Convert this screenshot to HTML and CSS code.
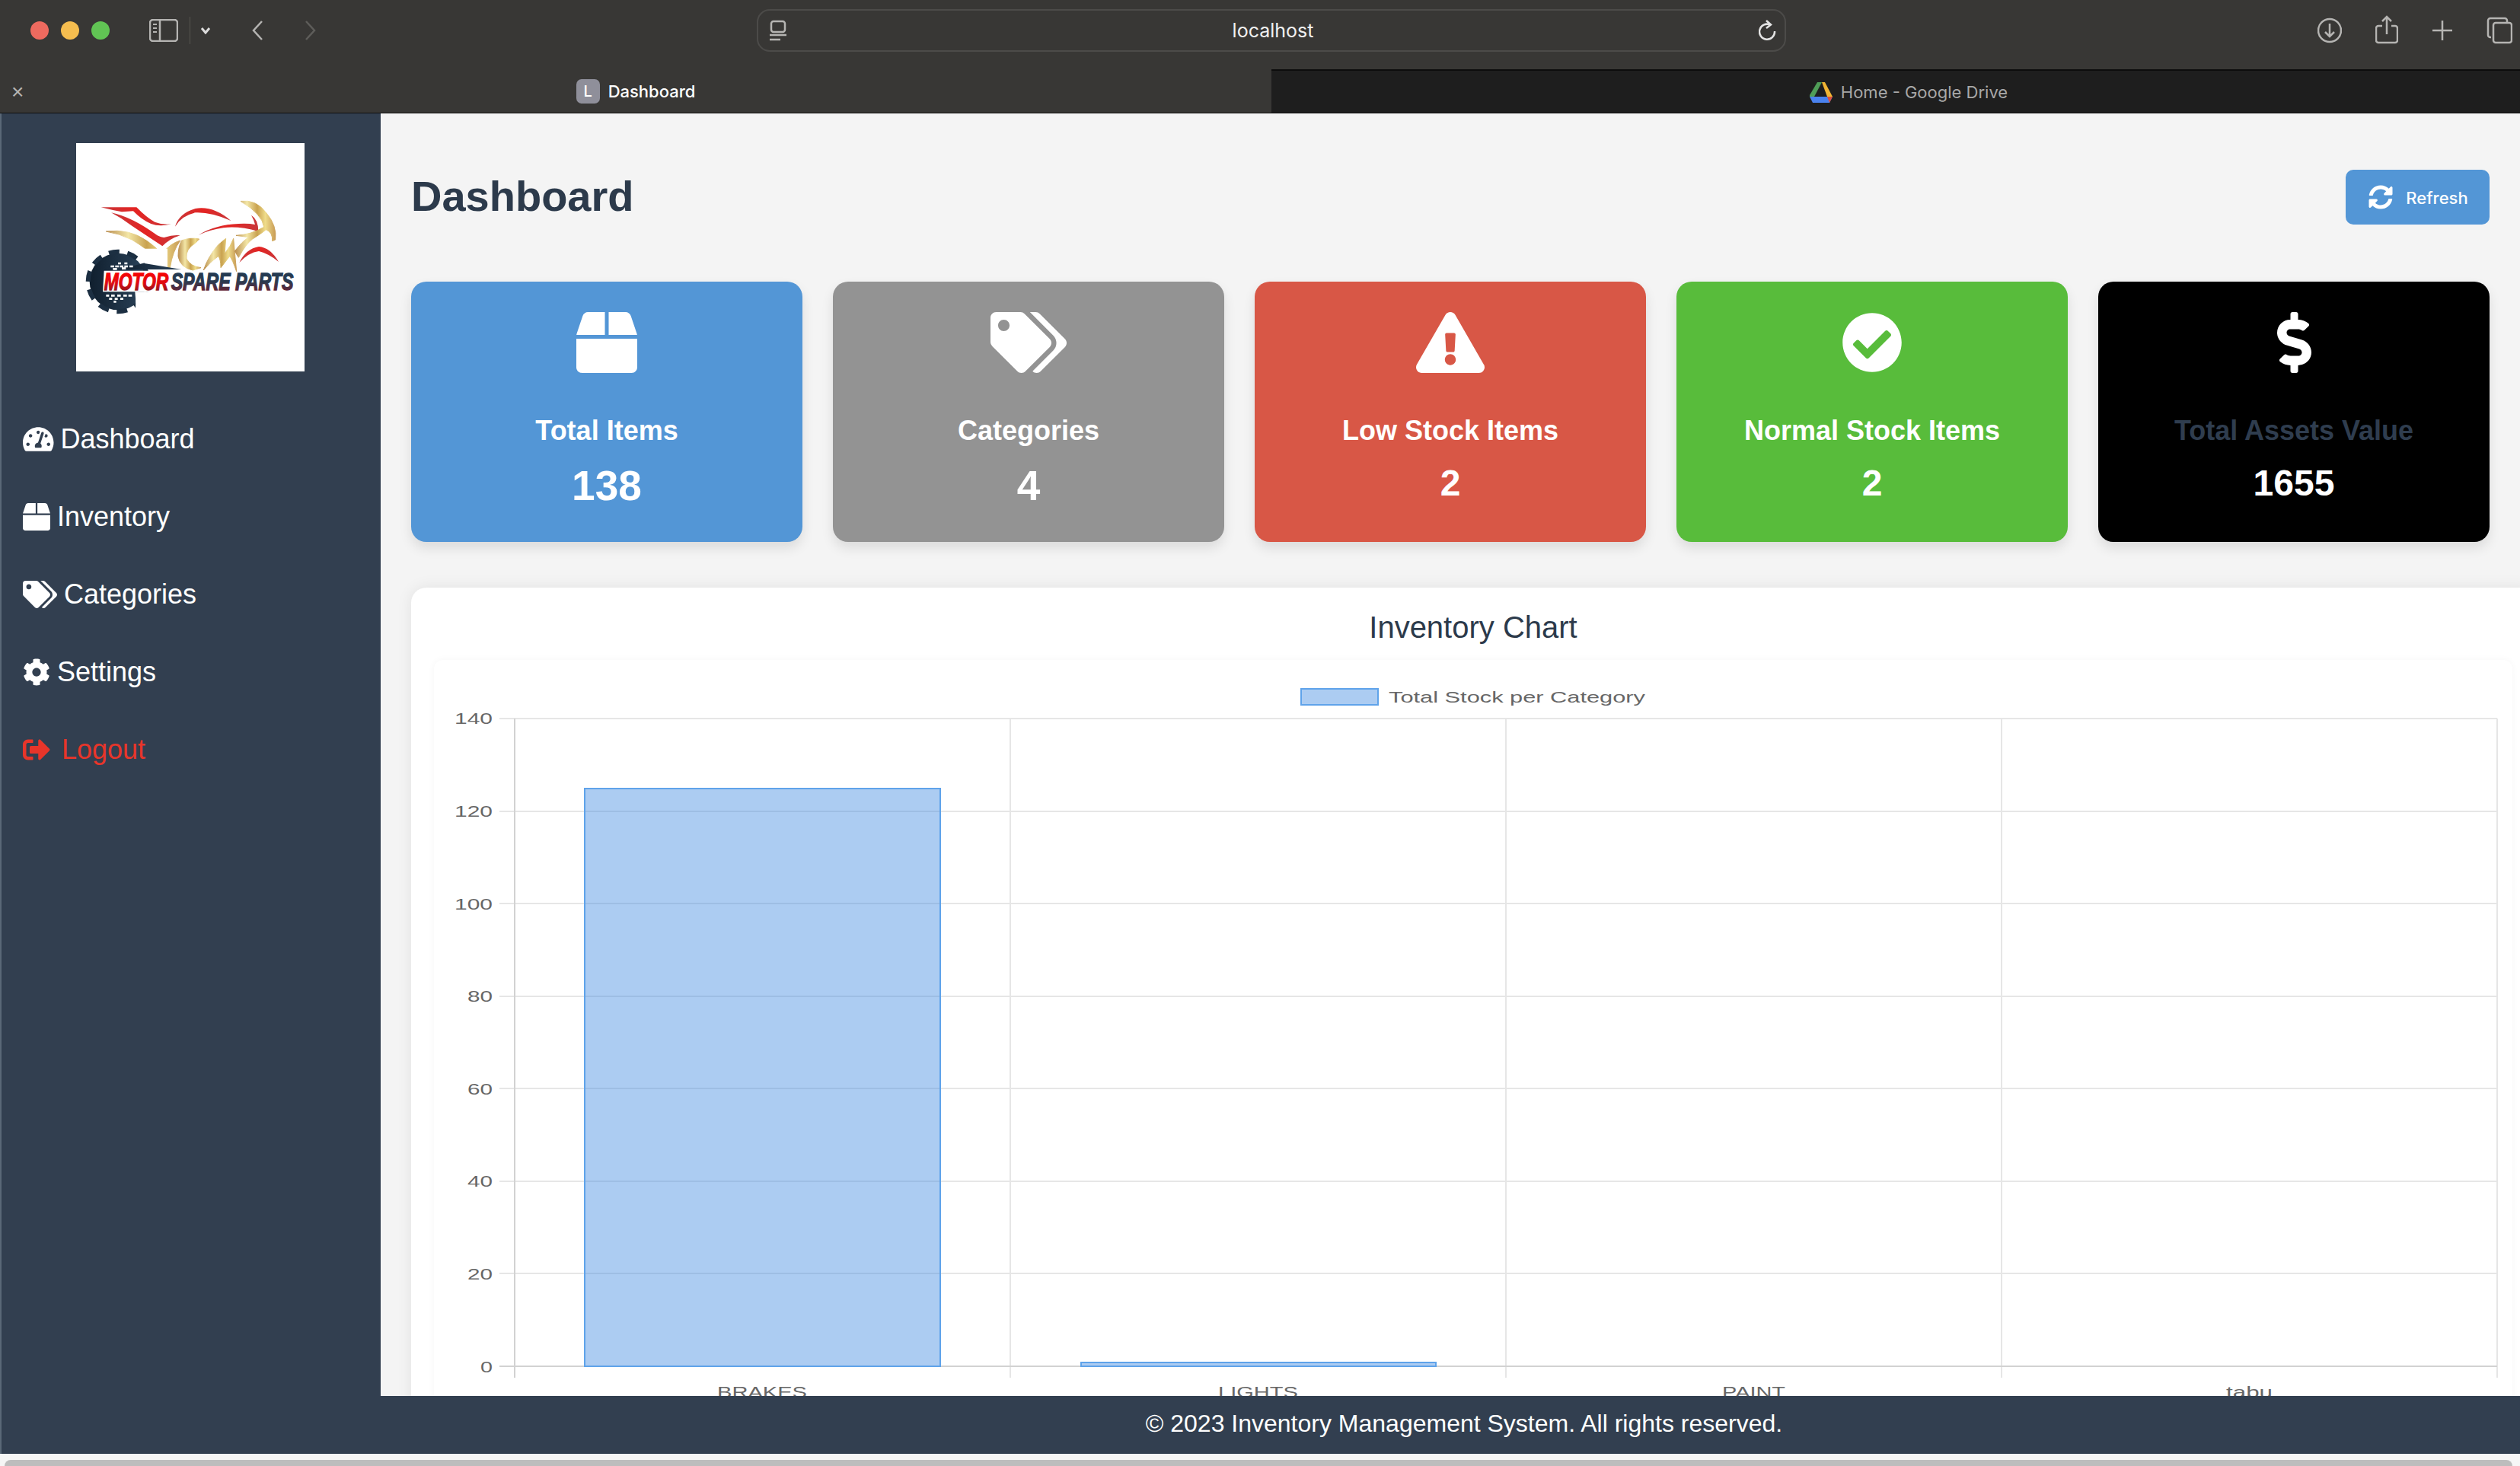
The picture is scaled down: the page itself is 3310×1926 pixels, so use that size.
FILE: index.html
```html
<!DOCTYPE html>
<html lang="en">
<head>
<meta charset="utf-8">
<title>Dashboard</title>
<link rel="stylesheet" href="styles.css">
</head>
<body>
<header class="toolbar">
  <div class="lights"><span class="light red"></span><span class="light yellow"></span><span class="light green"></span></div>
  <svg class="tb-sidebar" viewBox="0 0 38 30"><rect x="1" y="1" width="36" height="28" rx="4"/><path d="M14 1v28"/><path class="thin" d="M5 7h5M5 12h5M5 17h5"/></svg>
  <span class="tb-divider"></span>
  <svg class="tb-caret" viewBox="0 0 14 10"><path d="M2 2l5 6 5-6"/></svg>
  <svg class="tb-back" viewBox="0 0 16 28"><path d="M14 2L3 14l11 12"/></svg>
  <svg class="tb-forward" viewBox="0 0 16 28"><path d="M2 2l11 12L2 26"/></svg>
  <div class="urlbar">
    <svg class="url-icon" viewBox="0 0 24 28"><rect x="3" y="2" width="18" height="14" rx="3"/><path d="M1 20h22M1 26h14"/></svg>
    <span class="url-text">localhost</span>
    <svg class="url-reload" viewBox="0 0 24 30"><path d="M15 7.500A10 10 0 1 0 21 16"/><path d="M10 2l6 5.500-6 4.500"/></svg>
  </div>
  <div class="tb-right">
    <svg class="tb-dl" viewBox="0 0 32 36"><circle cx="16" cy="18" r="15"/><path d="M16 9v17M10 20l6 6 6-6"/></svg>
    <svg class="tb-share" viewBox="0 0 30 38"><path d="M9 14H4a3 3 0 0 0-3 3v16a3 3 0 0 0 3 3h22a3 3 0 0 0 3-3V17a3 3 0 0 0-3-3h-5"/><path d="M15 25V2M9 8l6-6 6 6"/></svg>
    <svg class="tb-plus" viewBox="0 0 28 28"><path d="M14 1v26M1 14h26"/></svg>
    <svg class="tb-tabs" viewBox="0 0 34 36"><path d="M6 27H5a3 3 0 0 1-3-3V5a3 3 0 0 1 3-3h19a3 3 0 0 1 3 3v2"/><rect x="9" y="8" width="24" height="26" rx="3"/></svg>
  </div>
</header>

<nav class="tabbar">
  <div class="tab tab-active">
    <span class="tab-close">×</span>
    <span class="favicon">L</span>
    <span class="tab-title">Dashboard</span>
  </div>
  <div class="tab tab-idle">
    <svg class="drive" viewBox="0 0 30 28">
      <path fill="#4f9d57" d="M10 1h6L6 20 0 20l0-2z"/>
      <path fill="#f2b533" d="M16 1h4l10 19h-7z"/>
      <path fill="#4a82ee" d="M6 20h24l-4 8H4l-4-8z"/>
      <path fill="#d9503f" d="M23 20h7l-4 8z"/>
    </svg>
    <span class="tab-title tab-title-dim">Home - Google Drive</span>
  </div>
</nav>

<div class="app">
  <aside class="sidebar">
    <div class="logo">
      <svg class="logo-art" viewBox="120 54 900 900" role="img" aria-label="MCM Motor Spare Parts logo">
        <defs>
          <linearGradient id="gold" x1="0" y1="0" x2="1" y2="0">
            <stop offset="0" stop-color="#b98d4e"/><stop offset=".3" stop-color="#f3e6a6"/><stop offset=".55" stop-color="#c9a24f"/><stop offset=".75" stop-color="#efdc8a"/><stop offset="1" stop-color="#c79a54"/>
          </linearGradient>
          <linearGradient id="redg" x1="0" y1="0" x2="1" y2="0">
            <stop offset="0" stop-color="#c8383a"/><stop offset=".5" stop-color="#e42322"/><stop offset="1" stop-color="#c8383a"/>
          </linearGradient>
          <linearGradient id="motor" x1="0" y1="0" x2="0" y2="1">
            <stop offset="0" stop-color="#ff0000"/><stop offset=".55" stop-color="#e00a10"/><stop offset="1" stop-color="#6e1822"/>
          </linearGradient>
          <linearGradient id="spare" x1="0" y1="0" x2="0" y2="1">
            <stop offset="0" stop-color="#1f3a52"/><stop offset=".5" stop-color="#2c3a50"/><stop offset="1" stop-color="#7c1a28"/>
          </linearGradient>
          <linearGradient id="navyg" x1="0" y1="0" x2="1" y2="0">
            <stop offset="0" stop-color="#101f2e"/><stop offset="1" stop-color="#2b435a"/>
          </linearGradient>
        </defs>
        <path fill="url(#redg)" d="M218 307L358 307Q400 350 430 365Q465 378 495 373Q450 385 415 372Q380 358 345 322L300 325Q260 318 218 307Z"/>
        <path fill="url(#redg)" d="M258 328Q340 345 440 418Q460 428 470 425Q500 415 530 418Q490 430 460 460Q400 420 340 380Q300 350 258 328Z"/>
        <path fill="url(#redg)" d="M510 383Q525 330 590 312Q660 300 730 360Q650 325 590 328Q535 340 510 383Z"/>
        <path fill="url(#redg)" d="M602 416Q670 375 760 372Q800 370 825 375Q820 355 810 338Q838 355 838 402Q760 380 700 388Q650 395 602 416Z"/>
        <path fill="url(#redg)" d="M763 525Q790 470 840 462Q885 465 918 522Q880 490 840 480Q800 485 763 525Z"/>
        <path class="gold-shape" d="M238 402Q330 390 400 440Q435 465 458 490Q490 450 530 438Q500 480 490 545L455 540L440 512Q400 470 340 435Q290 410 238 402Z"/>
        <path class="gold-shape" d="M535 438Q570 425 605 432L590 448Q550 470 555 510Q570 540 612 545L580 555Q530 545 522 500Q522 465 535 438Z"/>
        <path class="gold-shape" d="M622 555Q640 500 680 455L710 430L705 490Q730 460 740 430L752 560Q735 510 725 500L690 545Q690 510 680 500Q650 520 622 555Z"/>
        <path class="gold-shape" d="M768 283Q830 275 870 330Q912 380 905 435L893 440Q895 405 868 395Q850 410 815 432Q790 450 760 505L745 480Q775 440 800 425L750 418Q810 415 860 385Q855 335 768 283Z"/>
        <circle class="gear-body" cx="285" cy="600" r="112"/>
        <circle class="gear-teeth" cx="285" cy="600" r="118"/>
        <path fill="#fff" d="M352 640H480V745H350Q358 690 352 640Z"/>
        <path fill="#fff" d="M230 557H535V640H225Z"/>
        <path fill="#fff" d="M372 470H480V545L398 528Z"/>
        <path fill="url(#navyg)" d="M385 527L535 552H290Z"/>
        <path class="gear-check" d="M256 540h14M274 540h14M292 540h14M310 540h14M330 540h14M285 528h12M310 528h12M265 550h16M300 548h16M238 655h12M258 655h14M282 655h14M306 655h14M326 655h14M250 668h12M272 668h12M294 668h12M268 679h10"/>
        <text class="logo-text logo-motor" x="230" y="634" textLength="254" lengthAdjust="spacingAndGlyphs">MOTOR</text>
        <text class="logo-text logo-spare" x="494" y="634" textLength="482" lengthAdjust="spacingAndGlyphs">SPARE PARTS</text>
      </svg>
    </div>
    <ul class="nav">
      <li class="nav-item"><svg class="nav-icon" viewBox="0 0 576 512"><path d="M288 32C128.94 32 0 160.94 0 320c0 52.8 14.25 102.26 39.06 144.8 5.61 9.62 16.3 15.2 27.44 15.2h443c11.14 0 21.83-5.58 27.44-15.2C561.75 422.26 576 372.8 576 320c0-159.06-128.94-288-288-288zm0 64c14.71 0 26.58 10.13 30.32 23.65-1.11 2.26-2.64 4.23-3.45 6.67l-9.22 27.67c-5.13 3.49-10.97 6.01-17.64 6.01-17.67 0-32-14.33-32-32S270.33 96 288 96zM96 384c-17.67 0-32-14.33-32-32s14.33-32 32-32 32 14.33 32 32-14.33 32-32 32zm48-160c-17.67 0-32-14.33-32-32s14.33-32 32-32 32 14.33 32 32-14.33 32-32 32zm246.77-72.41l-61.33 184C343.13 347.33 352 364.54 352 384c0 11.72-3.38 22.55-8.88 32H232.88c-5.5-9.45-8.88-20.28-8.88-32 0-33.94 26.5-61.43 59.9-63.59l61.34-184.01c4.17-12.56 17.73-19.45 30.36-15.17 12.57 4.19 19.35 17.79 15.17 30.36zm14.66 57.2l15.52-46.55c3.47-1.29 7.13-2.23 11.05-2.23 17.67 0 32 14.33 32 32s-14.33 32-32 32c-11.38-.01-20.89-6.28-26.57-15.22zM480 384c-17.67 0-32-14.33-32-32s14.33-32 32-32 32 14.33 32 32-14.33 32-32 32z"/></svg>Dashboard</li>
      <li class="nav-item"><svg class="nav-icon" viewBox="0 0 512 512"><path d="M509.5 184.6L458.9 32.8C452.4 13.2 434.1 0 413.4 0H272v192h238.7c-.4-2.5-.4-5-1.2-7.4zM240 0H98.6c-20.7 0-39 13.2-45.5 32.8L2.5 184.6c-.8 2.4-.8 4.9-1.2 7.4H240V0zM0 224v240c0 26.5 21.5 48 48 48h416c26.5 0 48-21.5 48-48V224H0z"/></svg>Inventory</li>
      <li class="nav-item"><svg class="nav-icon" viewBox="0 0 640 512"><path d="M497.941 225.941L286.059 14.059A48 48 0 0 0 252.118 0H48C21.49 0 0 21.49 0 48v204.118a48 48 0 0 0 14.059 33.941l211.882 211.882c18.744 18.745 49.136 18.746 67.882 0l204.118-204.118c18.745-18.745 18.745-49.137 0-67.882zM112 160c-26.51 0-48-21.49-48-48s21.49-48 48-48 48 21.49 48 48-21.49 48-48 48zm513.941 133.823L421.823 497.941c-18.745 18.745-49.137 18.745-67.882 0l-.36-.36L527.64 323.522c16.999-16.999 26.36-39.6 26.36-63.64s-9.362-46.641-26.36-63.64L331.397 0h48.721a48 48 0 0 1 33.941 14.059l211.882 211.882c18.745 18.745 18.745 49.137 0 67.882z"/></svg>Categories</li>
      <li class="nav-item"><svg class="nav-icon" viewBox="0 0 512 512"><path d="M487.4 315.7l-42.6-24.6c4.3-23.2 4.3-47 0-70.2l42.6-24.6c4.9-2.8 7.1-8.6 5.5-14-11.1-35.6-30-67.8-54.7-94.6-3.8-4.1-10-5.1-14.8-2.3L380.8 110c-17.9-15.4-38.5-27.3-60.8-35.1V25.8c0-5.6-3.9-10.5-9.4-11.7-36.7-8.2-74.3-7.8-109.2 0-5.5 1.2-9.4 6.1-9.4 11.7V75c-22.2 7.9-42.8 19.8-60.8 35.1L88.7 85.500c-4.9-2.8-11-1.9-14.8 2.3-24.7 26.7-43.6 58.9-54.7 94.6-1.7 5.4.6 11.2 5.5 14L67.3 221c-4.3 23.2-4.3 47 0 70.2l-42.6 24.6c-4.9 2.8-7.1 8.6-5.5 14 11.1 35.6 30 67.8 54.7 94.6 3.8 4.1 10 5.1 14.8 2.3l42.6-24.6c17.9 15.4 38.5 27.3 60.8 35.1v49.2c0 5.6 3.9 10.5 9.4 11.7 36.7 8.2 74.3 7.8 109.2 0 5.5-1.2 9.4-6.1 9.4-11.7v-49.2c22.2-7.9 42.8-19.8 60.8-35.1l42.6 24.6c4.9 2.8 11 1.9 14.8-2.3 24.7-26.7 43.6-58.9 54.7-94.6 1.5-5.5-.7-11.3-5.6-14.1zM256 336c-44.1 0-80-35.9-80-80s35.9-80 80-80 80 35.9 80 80-35.9 80-80 80z"/></svg>Settings</li>
      <li class="nav-item nav-logout"><svg class="nav-icon" viewBox="0 0 512 512"><path d="M497 273L329 441c-15 15-41 4.500-41-17v-96H152c-13.3 0-24-10.7-24-24v-96c0-13.3 10.7-24 24-24h136V88c0-21.400 25.900-32 41-17l168 168c9.300 9.400 9.300 24.600 0 34zM192 436v-40c0-6.600-5.400-12-12-12H96c-17.700 0-32-14.300-32-32V160c0-17.700 14.300-32 32-32h84c6.600 0 12-5.400 12-12V76c0-6.600-5.400-12-12-12H96c-53 0-96 43-96 96v192c0 53 43 96 96 96h84c6.600 0 12-5.400 12-12z"/></svg>Logout</li>
    </ul>
  </aside>

  <main class="main">
    <div class="page-head">
      <h1 class="page-title">Dashboard</h1>
      <button class="refresh"><svg class="refresh-icon" viewBox="0 0 512 512"><path d="M370.72 133.28C339.458 104.008 298.888 87.962 255.848 88c-77.458.068-144.328 53.178-162.791 126.85-1.344 5.363-6.122 9.15-11.651 9.15H24.103c-7.498 0-13.194-6.807-11.807-14.176C33.933 94.924 134.813 8 256 8c66.448 0 126.791 26.136 171.315 68.685L463.03 40.97C478.149 25.851 504 36.559 504 57.941V192c0 13.255-10.745 24-24 24H345.941c-21.382 0-32.09-25.851-16.971-40.971l41.75-41.749zM32 296h134.059c21.382 0 32.09 25.851 16.971 40.971l-41.75 41.75c31.262 29.273 71.835 45.319 114.876 45.28 77.418-.07 144.315-53.144 162.787-126.849 1.344-5.363 6.122-9.15 11.651-9.15h57.304c7.498 0 13.194 6.807 11.807 14.176C478.067 417.076 377.187 504 256 504c-66.448 0-126.791-26.136-171.315-68.685L48.97 471.03C33.851 486.149 8 475.441 8 454.059V320c0-13.255 10.745-24 24-24z"/></svg>Refresh</button>
    </div>

    <section class="cards">
      <article class="card card-blue">
        <svg class="card-icon" viewBox="0 0 512 512"><path d="M509.5 184.6L458.9 32.8C452.4 13.2 434.1 0 413.4 0H272v192h238.7c-.4-2.5-.4-5-1.2-7.4zM240 0H98.6c-20.7 0-39 13.2-45.5 32.8L2.5 184.6c-.8 2.4-.8 4.9-1.2 7.4H240V0zM0 224v240c0 26.5 21.5 48 48 48h416c26.5 0 48-21.5 48-48V224H0z"/></svg>
        <h3 class="card-label">Total Items</h3>
        <p class="card-value card-value-lg">138</p>
      </article>
      <article class="card card-grey">
        <svg class="card-icon" viewBox="0 0 640 512"><path d="M497.941 225.941L286.059 14.059A48 48 0 0 0 252.118 0H48C21.49 0 0 21.49 0 48v204.118a48 48 0 0 0 14.059 33.941l211.882 211.882c18.744 18.745 49.136 18.746 67.882 0l204.118-204.118c18.745-18.745 18.745-49.137 0-67.882zM112 160c-26.51 0-48-21.49-48-48s21.49-48 48-48 48 21.49 48 48-21.49 48-48 48zm513.941 133.823L421.823 497.941c-18.745 18.745-49.137 18.745-67.882 0l-.36-.36L527.64 323.522c16.999-16.999 26.36-39.6 26.36-63.64s-9.362-46.641-26.36-63.64L331.397 0h48.721a48 48 0 0 1 33.941 14.059l211.882 211.882c18.745 18.745 18.745 49.137 0 67.882z"/></svg>
        <h3 class="card-label">Categories</h3>
        <p class="card-value card-value-lg">4</p>
      </article>
      <article class="card card-red">
        <svg class="card-icon" viewBox="0 0 576 512"><path d="M569.517 440.013C587.975 472.007 564.806 512 527.94 512H48.054c-36.937 0-59.999-40.055-41.577-71.987L246.423 24.035c18.467-32.009 64.72-31.951 83.154 0l239.94 416.978zM288 354c-25.405 0-46 20.595-46 46s20.595 46 46 46 46-20.595 46-46-20.595-46-46-46zm-43.673-165.346l7.418 136c.347 6.364 5.609 11.346 11.982 11.346h48.546c6.373 0 11.635-4.982 11.982-11.346l7.418-136c.375-6.874-5.098-12.654-11.982-12.654h-63.383c-6.884 0-12.356 5.78-11.981 12.654z"/></svg>
        <h3 class="card-label">Low Stock Items</h3>
        <p class="card-value">2</p>
      </article>
      <article class="card card-green">
        <svg class="card-icon" viewBox="0 0 512 512"><path d="M504 256c0 136.967-111.033 248-248 248S8 392.967 8 256 119.033 8 256 8s248 111.033 248 248zM227.314 387.314l184-184c6.248-6.248 6.248-16.379 0-22.627l-22.627-22.627c-6.248-6.249-16.379-6.249-22.628 0L216 308.118l-70.059-70.059c-6.248-6.248-16.379-6.248-22.628 0l-22.627 22.627c-6.248 6.248-6.248 16.379 0 22.627l104 104c6.249 6.249 16.379 6.249 22.628.001z"/></svg>
        <h3 class="card-label">Normal Stock Items</h3>
        <p class="card-value">2</p>
      </article>
      <article class="card card-black">
        <svg class="card-icon" viewBox="0 0 288 512"><path d="M209.2 233.4l-108-31.6C88.7 198.2 80 186.5 80 173.500c0-16.300 13.200-29.500 29.500-29.500h66.300c12.200 0 24.200 3.700 34.200 10.500 6.100 4.100 14.300 3.100 19.500-2l34.800-34c7.100-6.900 6.100-18.400-1.800-24.500C238 74.800 207.400 64.100 176 64V16c0-8.800-7.200-16-16-16h-32c-8.800 0-16 7.200-16 16v48h-2.500C45.800 64-5.400 118.700.5 183.600c4.200 46.100 39.400 83.600 83.800 96.600l102.500 30c12.500 3.700 21.200 15.300 21.200 28.300 0 16.300-13.200 29.500-29.500 29.500h-66.300C100 368 88 364.300 78 357.500c-6.100-4.100-14.300-3.100-19.500 2l-34.800 34c-7.100 6.900-6.100 18.400 1.800 24.500 24.500 19.200 55.100 29.900 86.500 30v48c0 8.800 7.200 16 16 16h32c8.800 0 16-7.200 16-16v-48.200c46.600-.9 90.300-28.600 105.700-72.700 21.500-61.600-14.600-124.800-72.500-141.700z"/></svg>
        <h3 class="card-label card-label-dark">Total Assets Value</h3>
        <p class="card-value">1655</p>
      </article>
    </section>

    <section class="panel">
      <h2 class="panel-title">Inventory Chart</h2>
      <div class="chart-box">
        <svg class="chart" viewBox="570 867 2730 1000">
          <rect class="legend-swatch" x="1709" y="905" width="101" height="21"/>
          <text class="tick" x="1824" y="923" textLength="337" lengthAdjust="spacingAndGlyphs">Total Stock per Category</text>

          <path class="grid" d="M656 944H3280M656 1066H3280M656 1187H3280M656 1309H3280M656 1430H3280M656 1552H3280M656 1673H3280"/>
          <path class="grid" d="M1327 944V1810M1978 944V1810M2629 944V1810M3280 944V1810"/>
          <path class="axis" d="M656 1795H3280M676 944V1810"/>

          <rect class="bar" x="768" y="1036" width="467" height="759"/>
          <rect class="bar" x="1420" y="1790" width="466" height="5"/>

          <text class="tick" x="597" y="951" textLength="50" lengthAdjust="spacingAndGlyphs">140</text>
          <text class="tick" x="597" y="1073" textLength="50" lengthAdjust="spacingAndGlyphs">120</text>
          <text class="tick" x="597" y="1195" textLength="50" lengthAdjust="spacingAndGlyphs">100</text>
          <text class="tick" x="614" y="1316" textLength="33" lengthAdjust="spacingAndGlyphs">80</text>
          <text class="tick" x="614" y="1438" textLength="33" lengthAdjust="spacingAndGlyphs">60</text>
          <text class="tick" x="614" y="1559" textLength="33" lengthAdjust="spacingAndGlyphs">40</text>
          <text class="tick" x="614" y="1681" textLength="33" lengthAdjust="spacingAndGlyphs">20</text>
          <text class="tick" x="631" y="1803" textLength="16" lengthAdjust="spacingAndGlyphs">0</text>

          <text class="tick" x="942" y="1836" textLength="118" lengthAdjust="spacingAndGlyphs">BRAKES</text>
          <text class="tick" x="1600" y="1836" textLength="105" lengthAdjust="spacingAndGlyphs">LIGHTS</text>
          <text class="tick" x="2262" y="1836" textLength="83" lengthAdjust="spacingAndGlyphs">PAINT</text>
          <text class="tick" x="2924" y="1836" textLength="61" lengthAdjust="spacingAndGlyphs">tabu</text>
        </svg>
      </div>
    </section>
  </main>
</div>

<footer class="footer">© 2023 Inventory Management System. All rights reserved.</footer>
<div class="hscroll"><span class="hscroll-thumb"></span></div>
</body>
</html>
```

FILE: styles.css
```css
* { box-sizing: border-box; }
html, body { margin: 0; padding: 0; height: 1926px; overflow: hidden; background: #f4f4f4; }
body { font-family: "Liberation Sans", Arial, sans-serif; display: flex; flex-direction: column; }

/* browser chrome */
.toolbar { height: 91px; flex: none; display: flex; align-items: center; background: #383735; padding: 0 10px 11px 40px; }
.lights { display: flex; gap: 16px; }
.light { width: 24px; height: 24px; border-radius: 50%; }
.red { background: #ee6a5f; }
.yellow { background: #f5bd4f; }
.green { background: #61c454; }
.toolbar svg { fill: none; stroke: #b5b4b2; stroke-width: 2.5; flex: none; }
.tb-sidebar { width: 38px; height: 30px; margin-left: 52px; }
.tb-sidebar .thin { stroke-width: 2; }
.tb-divider { width: 1px; height: 36px; margin-left: 15px; background: #55544f; }
.tb-caret { width: 14px; height: 10px; margin-left: 13px; stroke: #dcdcdc !important; stroke-width: 3 !important; }
.tb-back { width: 16px; height: 28px; margin-left: 53px; }
.tb-forward { width: 16px; height: 28px; margin-left: 54px; stroke: #5e5d5a !important; }
.urlbar { width: 1352px; height: 56px; margin-left: 578px; display: flex; align-items: center; justify-content: space-between; padding: 0 10px 0 14px; border: 2px solid #4c4b49; border-radius: 17px; }
.url-icon { width: 24px; height: 28px; stroke: #b5b4b2; }
.url-text { color: #f0f0f0; font: 400 25px "Inter", sans-serif; }
.url-reload { width: 24px; height: 30px; stroke: #e4e4e4 !important; }
.tb-right { margin-left: auto; display: flex; align-items: center; gap: 44px; }
.tb-dl { width: 32px; height: 36px; }
.tb-share { width: 30px; height: 38px; margin-top: -2px; }
.tb-plus { width: 28px; height: 28px; }
.tb-tabs { width: 34px; height: 36px; }

.tabbar { height: 58px; flex: none; display: flex; border-bottom: 1px solid #0d0d0d; }
.tab { position: relative; display: flex; align-items: center; justify-content: center; }
.tab-active { width: 1670px; background: #383735; }
.tab-idle { flex: 1; background: #1e1e1e; border-top: 2px solid #0d0d0d; padding-left: 34px; gap: 11px; }
.tab-close { position: absolute; left: 15px; top: 14px; color: #b5b4b2; font: 300 28px "Liberation Sans", sans-serif; }
.favicon { width: 31px; height: 32px; margin-right: 11px; border-radius: 7px; background: #8f8f9a; color: #fff; display: flex; align-items: center; justify-content: center; font: 500 20px "Inter", sans-serif; }
.tab-title { color: #fff; font: 500 22px "Inter", sans-serif; }
.tab-title-dim { color: #a8a8a8; font-weight: 400; }
.drive { width: 30px; height: 28px; }

/* app layout */
.app { height: 1685px; flex: none; display: flex; overflow: hidden; }
.sidebar { width: 500px; flex: none; background: #323f50; box-shadow: inset 2px 0 0 #5a6877; padding-top: 39px; }
.logo { width: 300px; height: 300px; margin: 0 auto; background: #fff; }
.logo-art { display: block; width: 300px; height: 300px; }
.gold-shape { fill: url(#gold); stroke: url(#gold); stroke-width: 3; }
.gear-body { fill: url(#navyg); }
.gear-teeth { fill: none; stroke: #1c2f42; stroke-width: 18; stroke-dasharray: 42 32.100; }
.gear-check { fill: none; stroke: #fff; stroke-width: 8; }
.logo-text { font: italic 700 92px "Liberation Sans", sans-serif; stroke-width: 4; }
.logo-motor { fill: url(#motor); stroke: url(#motor); }
.logo-spare { fill: url(#spare); stroke: url(#spare); }
.nav { list-style: none; margin: 38px 0 0; padding: 0; }
.nav-item { height: 102px; padding-left: 30px; display: flex; align-items: center; gap: 9px; color: #fff; font-size: 36px; }
.nav-icon { height: 36px; width: auto; fill: currentColor; flex: none; }
.nav-logout { color: #e8352a; gap: 15px; }

.main { flex: 1; min-width: 0; padding: 74px 40px 0; background: #f4f4f4; }
.page-head { display: flex; justify-content: space-between; align-items: center; height: 72px; }
.page-title { margin: -3px 0 0; color: #2c3a4b; font-size: 56px; font-weight: 700; line-height: 72px; }
.refresh { width: 189px; height: 72px; padding: 2px 0 0 2px; border: 0; border-radius: 10px; background: #5396d6; color: #fff; display: flex; align-items: center; justify-content: center; gap: 17px; font: 500 22px "Inter", sans-serif; }
.refresh-icon { width: 32px; height: 32px; fill: #fff; margin-top: -2px; }

.cards { display: grid; grid-template-columns: repeat(5, 514px); gap: 40px; margin-top: 75px; }
.card { height: 342px; border-radius: 20px; padding-top: 40px; display: flex; flex-direction: column; align-items: center; color: #fff; box-shadow: 0 8px 16px rgba(0, 0, 0, .1); }
.card-blue { background: #5396d6; }
.card-grey { background: #939393; }
.card-red { background: #d85746; }
.card-green { background: #58bc3b; }
.card-black { background: #000; }
.card-icon { height: 80px; width: auto; fill: #fff; flex: none; }
.card-label { margin: 56px 0 0; font-size: 36px; font-weight: 700; line-height: 40px; }
.card-label-dark { color: #2f3d4f; }
.card-value { margin: 19px 0 0; font-size: 48px; font-weight: 700; line-height: 60px; }
.card-value-lg { margin-top: 22px; font-size: 55px; }

.panel { width: 2790px; height: 1100px; margin-top: 60px; padding: 28px 30px 0; border-radius: 20px; background: #fff; box-shadow: 0 0 20px rgba(0, 0, 0, .08); }
.panel-title { margin: 0 0 19px; text-align: center; color: #2c3a4b; font-size: 40px; font-weight: 400; line-height: 48px; }
.chart-box { height: 1000px; border-radius: 12px; background: #fff; box-shadow: 0 0 10px rgba(0, 0, 0, .04); }
.chart { display: block; width: 2730px; height: 1000px; }
.grid { fill: none; stroke: #e6e6e6; stroke-width: 2; }
.axis { fill: none; stroke: #d2d2d2; stroke-width: 2; }
.bar { fill: rgba(74, 144, 226, .46); stroke: #5fa3ea; stroke-width: 2; }
.legend-swatch { fill: rgba(74, 144, 226, .46); stroke: #5fa3ea; stroke-width: 2; }
.tick { fill: #666; font-size: 21px; font-family: "Liberation Sans", sans-serif; }

.footer { height: 76px; flex: none; position: relative; z-index: 1; background: #323f50; box-shadow: inset 2px 0 0 #5a6877; color: #fff; font-size: 32px; text-align: center; line-height: 73px; padding-left: 536px; }
.hscroll { flex: 1; background: #f6f6f6; padding: 8px 10px 0 6px; }
.hscroll-thumb { display: block; height: 8px; border-radius: 8px 8px 0 0; background: #bdbdbd; }
```
